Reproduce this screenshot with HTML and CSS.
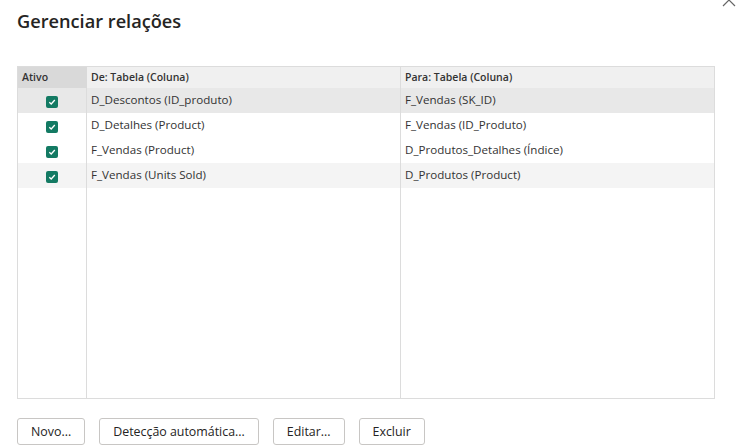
FILE: index.html
```html
<!DOCTYPE html>
<html lang="pt">
<head>
<meta charset="utf-8">
<link rel="stylesheet" href="styles.css">
</head>
<body>
<div class="dialog">
  <svg class="close" width="14" height="14" viewBox="0 0 14 14"><path d="M1 1L13 13M13 1L1 13" stroke="#666" stroke-width="1.2" fill="none"/></svg>
  <h1 class="title">Gerenciar relações</h1>
  <div class="grid">
    <div class="hd hd-active">Ativo</div>
    <div class="hd">De: Tabela (Coluna)</div>
    <div class="hd last">Para: Tabela (Coluna)</div>

    <div class="cell chk sel"><span class="box"><svg width="8" height="8" viewBox="0 0 8 8"><path d="M1.3 4.2L3.2 6L6.8 2" stroke="#fff" stroke-width="1.3" fill="none"/></svg></span></div>
    <div class="cell sel">D_Descontos (ID_produto)</div>
    <div class="cell sel last">F_Vendas (SK_ID)</div>

    <div class="cell chk"><span class="box"><svg width="8" height="8" viewBox="0 0 8 8"><path d="M1.3 4.2L3.2 6L6.8 2" stroke="#fff" stroke-width="1.3" fill="none"/></svg></span></div>
    <div class="cell">D_Detalhes (Product)</div>
    <div class="cell last">F_Vendas (ID_Produto)</div>

    <div class="cell chk"><span class="box"><svg width="8" height="8" viewBox="0 0 8 8"><path d="M1.3 4.2L3.2 6L6.8 2" stroke="#fff" stroke-width="1.3" fill="none"/></svg></span></div>
    <div class="cell">F_Vendas (Product)</div>
    <div class="cell last">D_Produtos_Detalhes (Índice)</div>

    <div class="cell chk alt"><span class="box"><svg width="8" height="8" viewBox="0 0 8 8"><path d="M1.3 4.2L3.2 6L6.8 2" stroke="#fff" stroke-width="1.3" fill="none"/></svg></span></div>
    <div class="cell alt">F_Vendas (Units Sold)</div>
    <div class="cell alt last">D_Produtos (Product)</div>

    <div class="cell"></div>
    <div class="cell"></div>
    <div class="cell last"></div>
  </div>
  <div class="actions">
    <button class="btn">Novo...</button>
    <button class="btn">Detecção automática...</button>
    <button class="btn">Editar...</button>
    <button class="btn">Excluir</button>
  </div>
</div>
</body>
</html>
```
FILE: styles.css
```css
html, body {
  margin: 0;
  padding: 0;
  background: #fff;
}
body {
  font-family: "Open Sans", "Noto Sans", sans-serif;
  color: #252423;
}
.dialog {
  position: relative;
  width: 740px;
  height: 448px;
  padding: 0 25px 0 17px;
  box-sizing: border-box;
  overflow: hidden;
}
.close {
  position: absolute;
  left: 722px;
  top: -7px;
}
.title {
  margin: 0;
  padding-top: 8px;
  font-size: 18.2px;
  line-height: 26px;
  font-weight: 600;
  color: #252423;
}
.grid {
  margin-top: 32px;
  height: 333px;
  box-sizing: border-box;
  border: 1px solid #dcdcdc;
  display: grid;
  grid-template-columns: 69px 314px 1fr;
  grid-template-rows: 21px repeat(4, 25px) 1fr;
}
.hd {
  background: #f0f0f0;
  font-size: 10.5px;
  font-weight: 600;
  color: #333;
  padding-left: 4px;
  line-height: 21px;
  border-right: 1px solid #dcdcdc;
}
.hd-active {
  background: #d9d9d9;
  border-right: 1px solid #d9d9d9;
}
.cell {
  border-right: 1px solid #dcdcdc;
  font-size: 11.6px;
  line-height: 24px;
  padding-left: 4px;
  color: #333;
  white-space: nowrap;
}
.last {
  border-right: none;
}
.sel {
  background: #e8e8e8;
}
.alt {
  background: #f4f4f4;
}
.chk {
  display: flex;
  align-items: center;
  justify-content: center;
  padding-left: 0;
}
.box {
  width: 12px;
  height: 12px;
  border-radius: 2px;
  background: #137a63;
  display: flex;
  align-items: center;
  justify-content: center;
  margin-top: 3px;
}
.actions {
  display: flex;
  gap: 14px;
  margin-top: 19px;
}
.btn {
  font-family: inherit;
  font-size: 12.4px;
  font-weight: 500;
  color: #252423;
  background: #fff;
  border: 1px solid #c8c6c4;
  border-radius: 3px;
  height: 27px;
  padding: 0 13px;
}
```
